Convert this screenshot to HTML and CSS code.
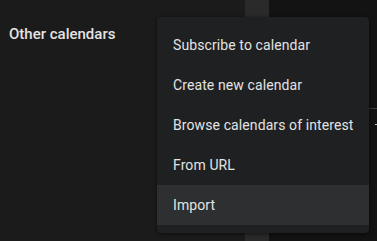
FILE: index.html
```html
<!DOCTYPE html>
<html>
<head>
<meta charset="utf-8">
<link rel="stylesheet" href="styles.css">
</head>
<body>
<div class="app">
  <aside class="sidebar">
    <div class="section-title">Other calendars</div>
  </aside>
  <div class="scroll-track"></div>
  <main class="main">
    <div class="divider"></div>
    <span class="edge-mark"></span>
  </main>
</div>
<ul class="menu">
  <li class="menu-item">Subscribe to calendar</li>
  <li class="menu-item">Create new calendar</li>
  <li class="menu-item">Browse calendars of interest</li>
  <li class="menu-item">From URL</li>
  <li class="menu-item is-active">Import</li>
</ul>
</body>
</html>
```
FILE: styles.css
```css
html, body {
  margin: 0;
  padding: 0;
  height: 100%;
  overflow: hidden;
}
body {
  background: #1b1b1b;
  font-family: Roboto, "Noto Sans", sans-serif;
  color: #e3e3e3;
}
.app {
  display: flex;
  height: 241px;
}
.sidebar {
  width: 245px;
  background: #1b1b1b;
}
.section-title {
  padding: 25px 0 0 9px;
  font-size: 15px;
  font-weight: 500;
  line-height: 18px;
  color: #e3e3e3;
}
.scroll-track {
  width: 24px;
  background: #2a2a2b;
}
.main {
  flex: 1;
  background: #131313;
  position: relative;
}
.divider {
  position: absolute;
  top: 108px;
  left: 99px;
  right: 0;
  height: 1px;
  background: #3c3c3c;
}
.edge-mark {
  position: absolute;
  top: 124px;
  right: 0;
  width: 2px;
  height: 1px;
  background: #bdbdbd;
}
.menu {
  position: absolute;
  top: 17px;
  left: 157px;
  width: 212px;
  margin: 0;
  padding: 8px 0;
  list-style: none;
  background: #1f2022;
  border-radius: 4px;
  box-shadow: 0 1px 4px rgba(0, 0, 0, 0.55);
}
.menu-item {
  height: 40px;
  line-height: 40px;
  padding-left: 16px;
  font-size: 14px;
  letter-spacing: 0.1px;
  color: #e3e3e3;
  white-space: nowrap;
}
.menu-item.is-active {
  background: #2d2f30;
}
```
